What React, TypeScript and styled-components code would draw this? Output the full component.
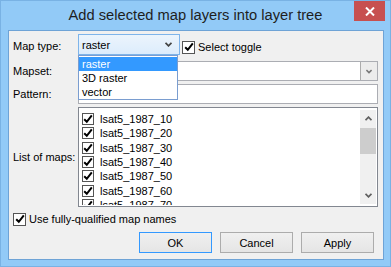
import React from "react";
import styled, { createGlobalStyle } from "styled-components";

const Global = createGlobalStyle`
  html, body { margin: 0; padding: 0; background: #92caf7; }
  * { box-sizing: border-box; }
  body { font-family: "Liberation Sans", Arial, sans-serif; font-size: 11px; color: #000; }
`;

const Window = styled.div`
  width: 391px;
  height: 267px;
  border: 1px solid #79b2e4;
  background: #92caf7;
  display: flex;
  flex-direction: column;
`;

const TitleBar = styled.div`
  height: 29px;
  flex: none;
  display: grid;
  grid-template-columns: 1fr auto 1fr;
  align-items: start;
`;

const Title = styled.div`
  grid-column: 2;
  font-size: 14.7px;
  line-height: 29px;
  color: #1e1e1e;
  white-space: nowrap;
`;

const CloseButton = styled.div`
  grid-column: 3;
  justify-self: end;
  width: 31px;
  height: 20px;
  margin-right: 5px;
  background: #c75050;
  display: flex;
  align-items: center;
  justify-content: center;
`;

const Content = styled.div`
  flex: 1;
  margin: 0 6px 6px 7px;
  border: 1px solid #6ea3d6;
  background: #f0f0f0;
  padding: 3px 5px 0 4px;
  display: flex;
  flex-direction: column;
`;

const Form = styled.div`
  display: grid;
  grid-template-columns: 65px 1fr;
  grid-template-rows: 24px 20px 20px 100px;
  row-gap: 3px;
`;

const Label = styled.div`
  align-self: center;
  white-space: nowrap;
`;

const Row = styled.div`
  display: flex;
  align-items: flex-start;
`;

const ComboWrap = styled.div`
  position: relative;
  width: 102px;
  height: 21px;
`;

const ActiveCombo = styled.div`
  height: 21px;
  border: 1px solid #7eb4ea;
  background: linear-gradient(#ecf4fc, #dcecfc);
  display: flex;
  align-items: center;
  justify-content: space-between;
  padding: 0 7px 0 3px;
`;

const DropList = styled.div`
  position: absolute;
  top: 21px;
  left: 0;
  width: 100px;
  border: 1px solid #7a9dd0;
  background: #fff;
  padding-top: 1px;
  z-index: 2;
`;

const DropItem = styled.div<{ $active?: boolean }>`
  height: 14px;
  line-height: 14px;
  padding-left: 3px;
  background: ${(p) => (p.$active ? "#3399ff" : "#fff")};
  color: ${(p) => (p.$active ? "#fff" : "#000")};
`;

const CheckLabel = styled.label`
  display: flex;
  align-items: center;
  gap: 3px;
  height: 14px;
  white-space: nowrap;
`;

const ToggleLabel = styled(CheckLabel)`
  margin-left: 2px;
  margin-top: 6px;
`;

const Box = styled.span`
  width: 13px;
  height: 13px;
  flex: none;
  border: 1px solid #555;
  background: #fff;
  display: flex;
  align-items: center;
  justify-content: center;
`;

const Field = styled.div`
  height: 20px;
  border: 1px solid #abadb3;
  background: #fff;
  display: flex;
  justify-content: flex-end;
`;

const DropButton = styled.div`
  width: 17px;
  border-left: 1px solid #acacac;
  background: #ececec;
  display: flex;
  align-items: center;
  justify-content: center;
`;

const ListBox = styled.div`
  height: 100px;
  border: 1px solid #828790;
  background: #fff;
  padding: 1px;
  display: flex;
  overflow: hidden;
`;

const ListItems = styled.div`
  flex: 1;
  padding: 3px 0 0 1px;
  overflow: hidden;
`;

const ListItem = styled.div`
  height: 14.3px;
  display: flex;
  align-items: center;
  gap: 6px;
  flex: none;
`;

const ListCheckBox = styled(Box)`
  width: 12px;
  height: 12px;
  margin-left: 1px;
`;

const Scrollbar = styled.div`
  width: 16px;
  flex: none;
  margin: 1px 0;
  background: #f0f0f0;
  display: flex;
  flex-direction: column;
`;

const ScrollArrow = styled.div`
  height: 17px;
  flex: none;
  display: flex;
  align-items: center;
  justify-content: center;
`;

const Thumb = styled.div`
  height: 26px;
  margin-top: 1px;
  background: #cdcdcd;
`;

const Track = styled.div`
  flex: 1;
`;

const BottomCheck = styled(CheckLabel)`
  margin-top: 5px;
`;

const ButtonRow = styled.div`
  display: flex;
  justify-content: flex-end;
  gap: 8px;
  margin-top: 6px;
  margin-right: 4px;
`;

const Button = styled.div<{ $default?: boolean }>`
  width: 73px;
  height: 21px;
  border: 1px solid ${(p) => (p.$default ? "#3399ff" : "#acacac")};
  background: linear-gradient(#f0f0f0, #e5e5e5);
  display: flex;
  align-items: center;
  justify-content: center;
`;

const Check = () => (
  <svg width="10" height="10" viewBox="0 0 10 10">
    <path d="M1.2 5.2 L3.8 7.8 L8.8 1.4" fill="none" stroke="#000" strokeWidth="2" />
  </svg>
);

const Chevron = ({ up, color = "#444", w = 7 }: { up?: boolean; color?: string; w?: number }) => (
  <svg width={w} height="5" viewBox="0 0 7 5">
    <path
      d={up ? "M0.5 4.2 L3.5 1.2 L6.5 4.2" : "M0.5 0.8 L3.5 3.8 L6.5 0.8"}
      fill="none"
      stroke={color}
      strokeWidth="1.8"
    />
  </svg>
);

const maps = ["10", "20", "30", "40", "50", "60", "70"];

export default function App() {
  return (
    <>
      <Global />
      <Window>
        <TitleBar>
          <Title>Add selected map layers into layer tree</Title>
          <CloseButton>
            <svg width="10" height="9" viewBox="0 0 10 9">
              <path d="M1 0.5 L9 8.5 M9 0.5 L1 8.5" stroke="#fff" strokeWidth="2" />
            </svg>
          </CloseButton>
        </TitleBar>
        <Content>
          <Form>
            <Label>Map type:</Label>
            <Row>
              <ComboWrap>
                <ActiveCombo>
                  <span>raster</span>
                  <Chevron />
                </ActiveCombo>
                <DropList>
                  <DropItem $active>raster</DropItem>
                  <DropItem>3D raster</DropItem>
                  <DropItem>vector</DropItem>
                </DropList>
              </ComboWrap>
              <ToggleLabel>
                <Box>
                  <Check />
                </Box>
                Select toggle
              </ToggleLabel>
            </Row>
            <Label>Mapset:</Label>
            <Field>
              <DropButton>
                <Chevron color="#777" w={6} />
              </DropButton>
            </Field>
            <Label>Pattern:</Label>
            <Field />
            <Label>List of maps:</Label>
            <ListBox>
              <ListItems>
                {maps.map((m) => (
                  <ListItem key={m}>
                    <ListCheckBox>
                      <Check />
                    </ListCheckBox>
                    lsat5_1987_{m}
                  </ListItem>
                ))}
              </ListItems>
              <Scrollbar>
                <ScrollArrow>
                  <Chevron up color="#606060" />
                </ScrollArrow>
                <Thumb />
                <Track />
                <ScrollArrow>
                  <Chevron color="#606060" />
                </ScrollArrow>
              </Scrollbar>
            </ListBox>
          </Form>
          <BottomCheck>
            <Box>
              <Check />
            </Box>
            Use fully-qualified map names
          </BottomCheck>
          <ButtonRow>
            <Button $default>OK</Button>
            <Button>Cancel</Button>
            <Button>Apply</Button>
          </ButtonRow>
        </Content>
      </Window>
    </>
  );
}
